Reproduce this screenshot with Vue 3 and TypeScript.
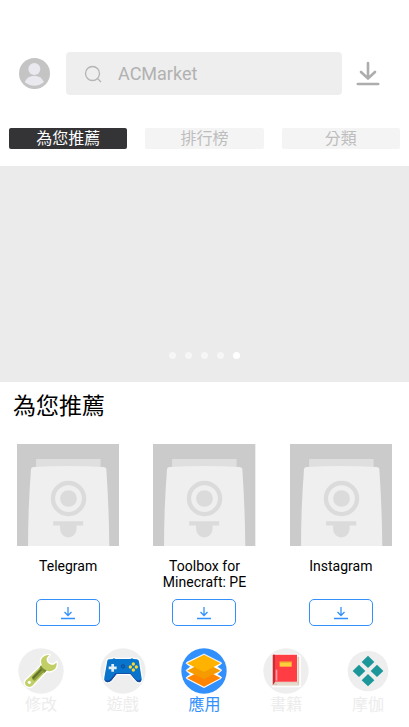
<script setup lang="ts">
import { ref } from 'vue'

const query = ref<string>('')
const tabs: string[] = ['為您推薦', '排行榜', '分類']
const activeTab = ref<number>(0)
const slides = 5
const activeSlide = ref<number>(4)
const apps: string[] = ['Telegram', 'Toolbox for Minecraft: PE', 'Instagram']

interface NavItem {
  id: string
  label: string
}
const navItems: NavItem[] = [
  { id: 'mods', label: '修改' },
  { id: 'games', label: '遊戲' },
  { id: 'apps', label: '應用' },
  { id: 'books', label: '書籍' },
  { id: 'moga', label: '摩伽' },
]
const activeNav = ref<string>('apps')
</script>

<template>
  <div class="page">
    <header class="top">
      <button class="plain" type="button" aria-label="Profile">
        <svg class="avatar" viewBox="0 0 93 93" aria-hidden="true">
          <circle cx="46.500" cy="46.500" r="46.500" fill="#c4c4c4" />
          <circle cx="46" cy="33" r="18" fill="#e9e9ef" />
          <path d="M17 72Q27 53 46 53T75 72Q63 83 46 83T17 72Z" fill="#e9e9ef" />
        </svg>
      </button>
      <label class="search">
        <svg class="glass" viewBox="0 0 18 18" fill="none" stroke="#b4b4b4" stroke-width="1.3" aria-hidden="true">
          <circle cx="8.500" cy="8.500" r="7" />
          <path d="M13.500 13.500L17 17" />
        </svg>
        <input v-model="query" type="text" placeholder="ACMarket" aria-label="ACMarket" />
      </label>
      <button class="plain" type="button" aria-label="Downloads">
        <svg class="downloads" viewBox="0 0 24 26" fill="none" stroke="#adadad" stroke-width="2.600" stroke-linecap="round" aria-hidden="true">
          <path d="M12 2V17.500M5 11L12 17.500L19 11" />
          <path d="M1.800 23H22.200" />
        </svg>
      </button>
    </header>

    <nav class="tabs">
      <button
        v-for="(tab, i) in tabs"
        :key="tab"
        type="button"
        class="tab"
        :class="{ active: i === activeTab }"
        @click="activeTab = i"
      >{{ tab }}</button>
    </nav>

    <section class="banner">
      <button
        v-for="n in slides"
        :key="n"
        type="button"
        class="dot"
        :class="{ active: n - 1 === activeSlide }"
        :aria-label="String(n)"
        @click="activeSlide = n - 1"
      ></button>
    </section>

    <main>
      <h2 class="title">為您推薦</h2>
      <ul class="apps">
        <li v-for="app in apps" :key="app" class="app">
          <svg class="thumb" viewBox="0 0 306 306" aria-hidden="true">
            <path fill="#cbcbcb" d="M0 0H306V306H0Z" />
            <path fill="#dfdfdf" d="M57 45H250V75H57Z" />
            <path fill="#efefef" d="M42 74Q43 70 50 69Q154 62 258 69Q266 70 267 74Q275 190 276 306H33Q33 190 42 74Z" />
            <circle cx="154" cy="163" r="46.500" fill="none" stroke="#dbdbdb" stroke-width="13" />
            <circle cx="154" cy="163" r="25" fill="#dbdbdb" />
            <path fill="#dbdbdb" d="M108 231H198V244H178V255A24 24 0 0 1 129 255V244H108Z" />
          </svg>
          <h3 class="name">{{ app }}</h3>
          <button class="get" type="button" :aria-label="app">
            <svg viewBox="0 0 14 14" fill="none" stroke="#3290fc" stroke-width="1.300" aria-hidden="true">
              <path d="M7 1V9.500M3.500 6L7 9.500L10.500 6M0 12.500H14" />
            </svg>
          </button>
        </li>
      </ul>
    </main>

    <nav class="bottom">
      <button
        v-for="item in navItems"
        :key="item.id"
        type="button"
        class="item"
        :class="{ active: item.id === activeNav }"
        @click="activeNav = item.id"
      >
        <svg viewBox="0 0 138 138" aria-hidden="true">
          <circle class="disc" cx="69" cy="69" :r="item.id === 'moga' ? 61 : 68" />
          <g v-if="item.id === 'mods'">
            <path
              d="M69 51Q63 34 75 25Q84 17 97 20L88 31Q87 45 100 48L107 48L117 40Q121 58 109 67Q99 75 87 70L45 114Q35 123 24 115Q15 106 22 96Z"
              fill="#c1cf66" stroke="#fff" stroke-width="4" stroke-linejoin="round"
            />
            <path d="M69 52Q73 63 86 67L79 75L64 60Z" fill="#768b34" />
            <path d="M41 87L67 60L78 71L50 98Q42 97 41 87Z" fill="#8b9d3c" />
            <path d="M43 88L69 62L72 66L46 94Z" fill="#5f702b" />
            <circle cx="34" cy="103" r="5" fill="#fff" />
          </g>
          <g v-else-if="item.id === 'games'">
            <path
              d="M20 38Q21 32 28 32L37 31Q42 27 47 31H90Q96 27 101 31L111 32Q118 33 119 40L127 91Q127 104 118 105Q111 105 106 98L91 80H50L36 98Q29 106 20 104Q10 101 11 88Z"
              fill="#0874cb" stroke="#fff" stroke-width="4" stroke-linejoin="round"
            />
            <path d="M13 90Q14 98 23 98Q28 98 34 91L46 76H92L107 94Q114 101 124 93Q124 103 117 103Q111 103 107 97L91 78H50L35 97Q29 104 20 102Q12 99 13 90Z" fill="#16489c" />
            <path d="M38 48V71M26 59.500H50" fill="none" stroke="#e2edf4" stroke-width="8" />
            <circle cx="69" cy="55" r="5" fill="#1269bd" stroke="#104999" stroke-width="3" />
            <g fill="#ffda2c">
              <circle cx="100" cy="48" r="5" />
              <circle cx="91" cy="57" r="5" />
              <circle cx="109" cy="57" r="5" />
              <circle cx="100" cy="66" r="5" />
            </g>
          </g>
          <g v-else-if="item.id === 'apps'" stroke-linejoin="round">
            <path
              d="M69 18L121 44Q123 47 119 49L108 56L121 65Q123 68 119 70L108 79L121 87Q123 90 119 92L69 119L17 92Q14 90 17 87L29 79L17 70Q14 68 17 65L29 56L17 48Q14 46 17 43Z"
              fill="#fff" stroke="#fff" stroke-width="2"
            />
            <path d="M18 90L69 64L119 90L69 116Z" fill="#ff8500" />
            <path d="M18 68L69 42L119 68L69 93Z" fill="#f59b00" />
            <path d="M18 46L69 20L119 46L69 72Z" fill="#ffb300" />
          </g>
          <g v-else-if="item.id === 'books'">
            <path d="M29 20H102V24H111V115H29Z" fill="#dacbb9" stroke="#fff" stroke-width="5" stroke-linejoin="round" />
            <path d="M102 20V101H29" fill="none" stroke="#fff" stroke-width="3" />
            <path d="M30 20H102V101H37L30 107Z" fill="#ff3d43" />
            <path d="M29 20H36V101L29 113Z" fill="#c52f36" />
            <path d="M38 65H43V98H38Z" fill="#ff9ca0" />
            <path d="M50 41H86V56H50Z" fill="#ffd03b" />
            <path d="M50 41H86V44H50Z" fill="#e8a52a" />
            <path d="M43 108H105" stroke="#f2e9df" stroke-width="3" />
          </g>
          <g v-else fill="#1b9699">
            <path d="M69 23L88 42L69 60L50 42Z" />
            <path d="M42 50L61 69L42 87L23 69Z" />
            <path d="M96 50L115 69L96 87L77 69Z" />
            <path d="M69 78L88 97L69 115L50 97Z" />
          </g>
        </svg>
        <span>{{ item.label }}</span>
      </button>
    </nav>
  </div>
</template>

<style>
body {
  margin: 0;
  background: #fff;
}
</style>

<style scoped>
.page {
  display: flex;
  flex-direction: column;
  min-height: 100vh;
  box-sizing: border-box;
  padding-top: 52px;
  font-family: Roboto, "Noto Sans CJK TC", sans-serif;
  color: #000;
}
button {
  font: inherit;
  padding: 0;
  border: 0;
  background: none;
  cursor: pointer;
}
svg {
  display: block;
}
.top {
  display: flex;
  align-items: center;
  padding: 0 29px 0 19px;
}
.plain {
  flex: none;
}
.avatar {
  width: 31px;
  height: 31px;
}
.search {
  flex: 1;
  min-width: 0;
  height: 43px;
  display: flex;
  align-items: center;
  gap: 16px;
  box-sizing: border-box;
  margin: 0 14px 0 16px;
  padding: 0 18px;
  border-radius: 4px;
  background: #eee;
}
.glass {
  flex: none;
  width: 18px;
  height: 18px;
}
.search input {
  flex: 1;
  min-width: 0;
  padding: 0;
  border: 0;
  outline: 0;
  background: none;
  font: 18px/24px Roboto, sans-serif;
  color: #777;
}
.search input::placeholder {
  color: #b1b1b1;
  opacity: 1;
}
.downloads {
  width: 24px;
  height: 26px;
}
.tabs {
  display: grid;
  grid-template-columns: repeat(3, 1fr);
  gap: 18px;
  padding: 33px 9px 17px;
}
.tab {
  height: 21px;
  box-sizing: border-box;
  padding-top: 1px;
  border-radius: 2px;
  background: #f4f4f4;
  color: #bdbdbd;
  font-size: 16px;
  line-height: 20px;
}
.tab.active {
  background: #343436;
  color: #fff;
}
.banner {
  display: flex;
  justify-content: center;
  align-items: flex-end;
  gap: 9px;
  height: 216px;
  box-sizing: border-box;
  padding-bottom: 23px;
  background: #ebebeb;
}
.dot {
  width: 7px;
  height: 7px;
  border-radius: 50%;
  background: #f6f6f6;
}
.dot.active {
  background: #fff;
}
.title {
  margin: 0;
  padding: 9px 13px 21px;
  font-size: 23px;
  font-weight: 400;
  line-height: 32px;
}
.apps {
  display: grid;
  grid-template-columns: repeat(3, 1fr);
  margin: 0;
  padding: 0;
  list-style: none;
}
.app {
  display: flex;
  flex-direction: column;
  align-items: center;
  padding: 0 17px;
}
.thumb {
  width: 100%;
}
.name {
  min-height: 32px;
  margin: 12px 0 9px;
  font-size: 14px;
  font-weight: 400;
  line-height: 16px;
  text-align: center;
}
.get {
  display: flex;
  align-items: center;
  justify-content: center;
  width: 64px;
  height: 27px;
  box-sizing: border-box;
  border: 1px solid #3290fc;
  border-radius: 5px;
}
.get svg {
  width: 14px;
  height: 14px;
}
.bottom {
  display: grid;
  grid-template-columns: repeat(5, 1fr);
  margin-top: auto;
  padding: 22px 0 11px;
}
.item {
  display: flex;
  flex-direction: column;
  align-items: center;
  color: #ececec;
  font-size: 16px;
  line-height: 22px;
}
.item svg {
  width: 46px;
  height: 46px;
}
.disc {
  fill: #eee;
}
.item.active {
  color: #3290fc;
}
.item.active .disc {
  fill: #3290fc;
}
</style>
